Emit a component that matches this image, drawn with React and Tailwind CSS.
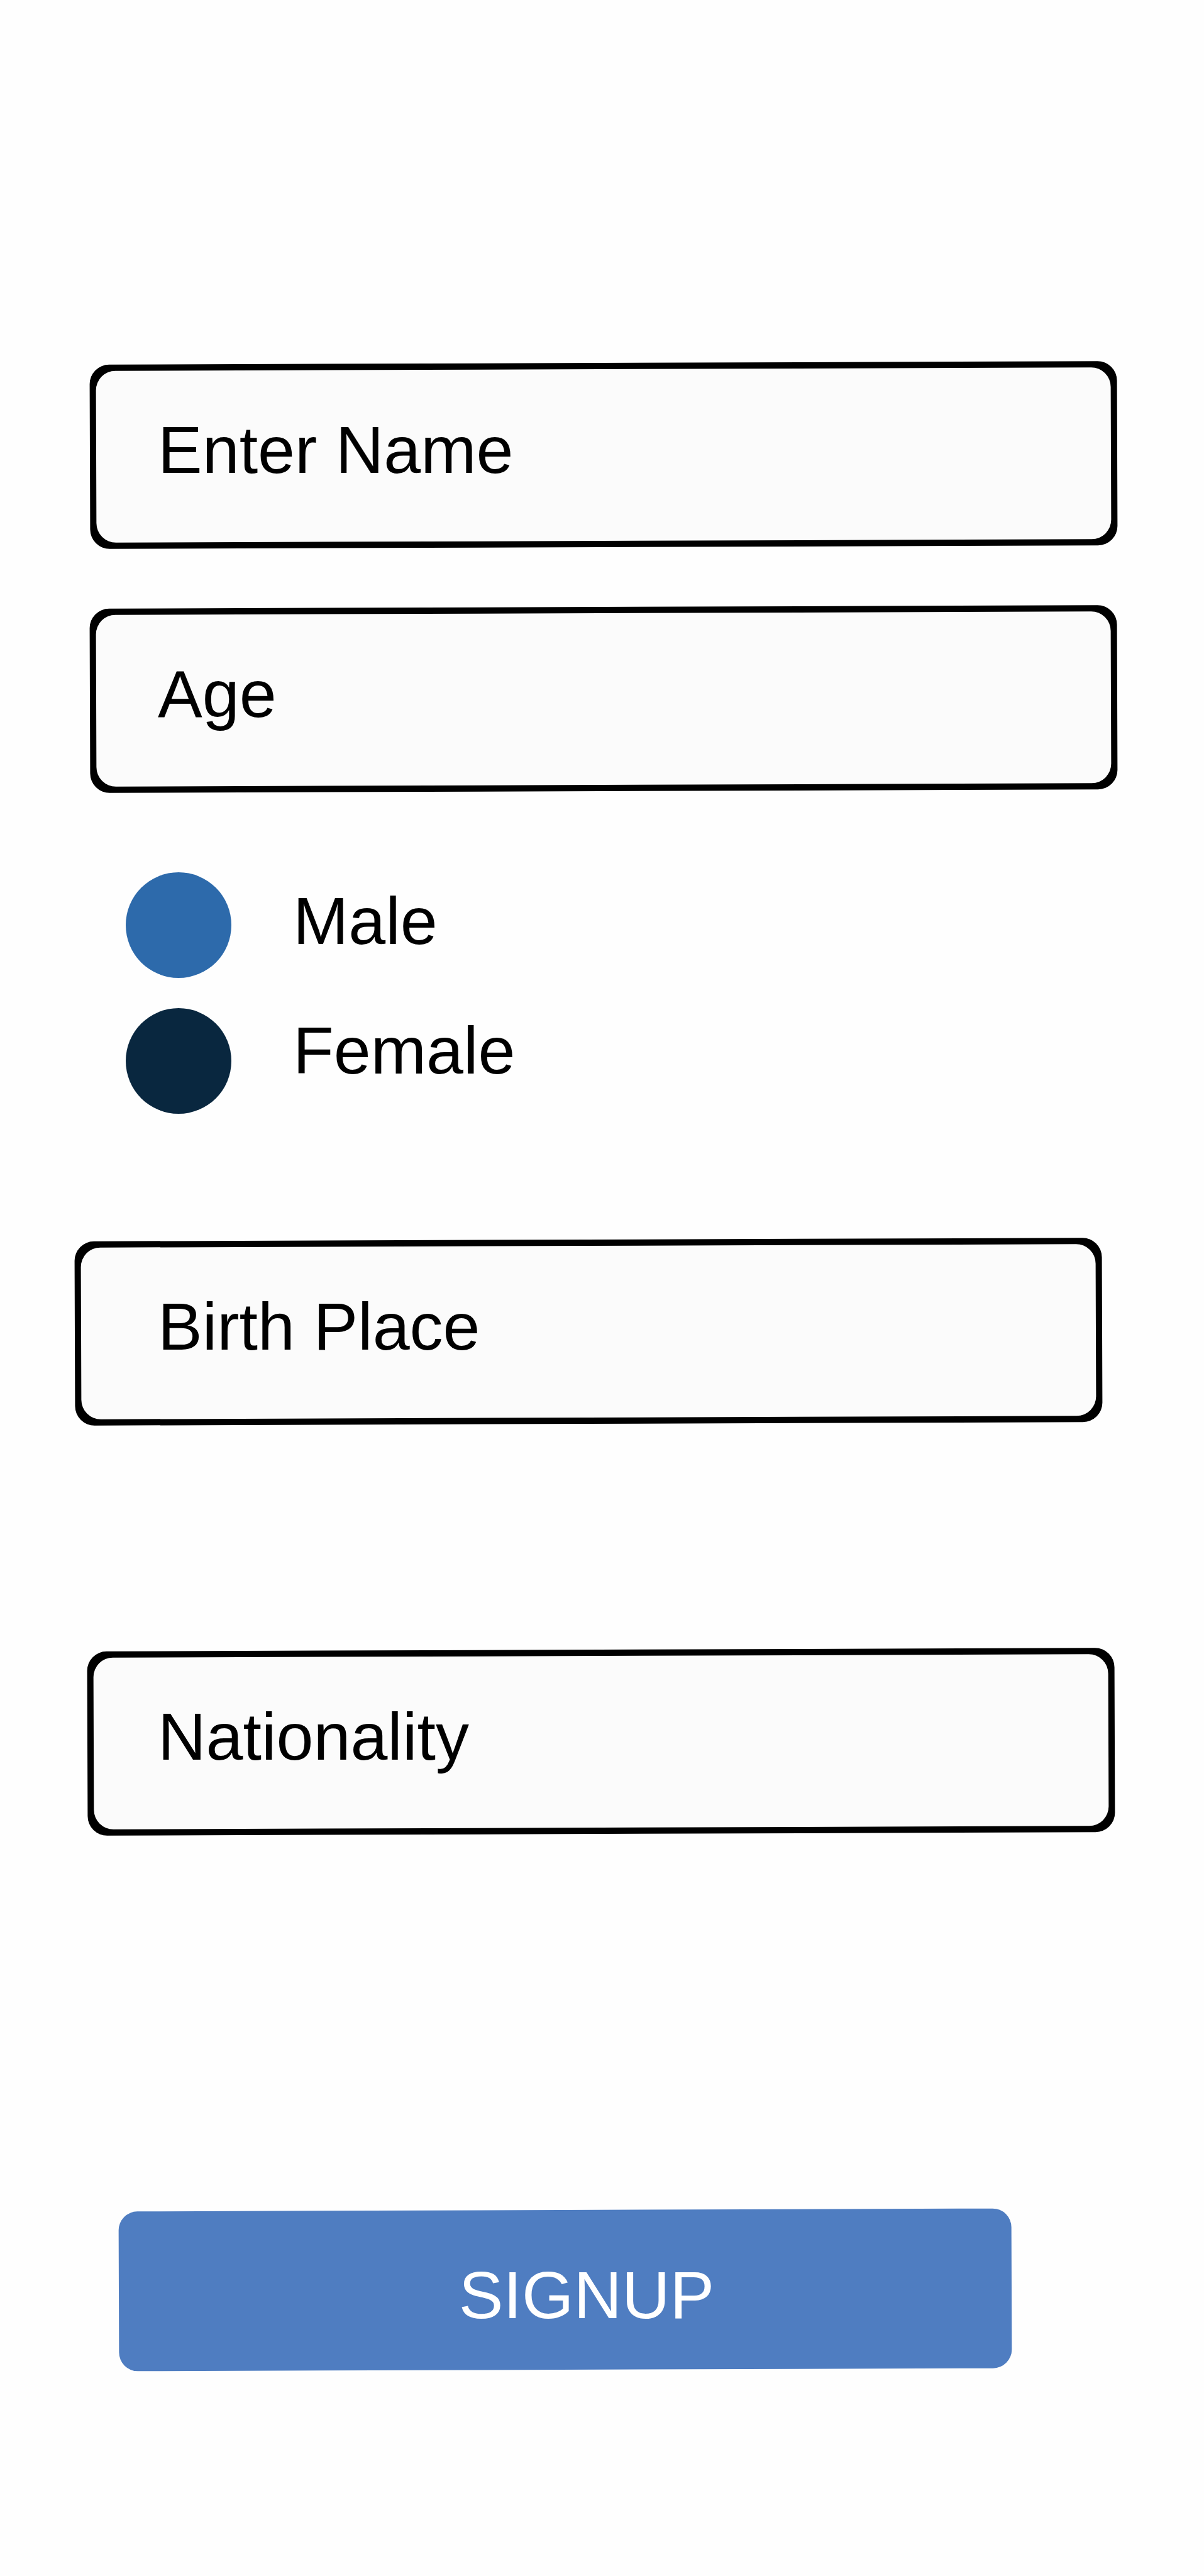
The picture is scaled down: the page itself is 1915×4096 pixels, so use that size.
import React from "react";

function Field({ id, label, type = "text", shift = "", indent = "pl-[108px]" }) {
  return (
    <div className={`relative h-[293px] ${shift}`}>
      <div className="absolute inset-0 -rotate-[0.2deg] rounded-[31px] bg-black p-[10px]">
        <div className="h-full rounded-[31px] bg-[#fbfbfb]" />
      </div>
      <input
        id={id}
        name={id}
        type={type}
        aria-label={label}
        placeholder={label}
        className={`relative block h-full w-full bg-transparent pb-4 pr-8 outline-none placeholder:text-black placeholder:opacity-100 ${indent}`}
      />
    </div>
  );
}

function Choice({ id, color, defaultChecked }) {
  return (
    <input
      id={id}
      type="radio"
      name="gender"
      value={id}
      defaultChecked={defaultChecked}
      className={`block size-[168px] appearance-none rounded-full ${color}`}
    />
  );
}

export default function App() {
  return (
    <main className="min-h-screen w-full overflow-hidden bg-[#fefefe] font-['Liberation_Sans',Arial,sans-serif] text-[106px] text-black">
      <form
        className="flex flex-col pb-[328px] pl-[143px] pr-[138px] pt-[577px]"
        onSubmit={(event) => event.preventDefault()}
      >
        <div className="flex flex-col gap-[95px]">
          <Field id="name" label="Enter Name" />
          <Field id="age" label="Age" />
        </div>

        <div role="radiogroup" aria-label="Gender" className="mt-[103px] flex gap-[98px] pl-[57px]">
          <div className="flex flex-col gap-12 pt-[26px]">
            <Choice id="male" color="bg-[#2d6aab]" defaultChecked />
            <Choice id="female" color="bg-[#09273f]" />
          </div>
          <div className="flex flex-col leading-[206px]">
            <label htmlFor="male">Male</label>
            <label htmlFor="female">Female</label>
          </div>
        </div>

        <div className="mt-[198px] flex flex-col gap-[359px]">
          <Field id="birth-place" label="Birth Place" shift="-ml-6 mr-6" indent="pl-[132px]" />
          <Field id="nationality" label="Nationality" shift="-ml-1 mr-1" indent="pl-[112px]" />
        </div>

        <button
          type="submit"
          className="relative ml-[46px] mr-[168px] mt-[598px] h-[254px] text-white"
        >
          <span className="absolute inset-0 -rotate-[0.2deg] rounded-[30px] bg-[#4f7dc1]" />
          <span className="relative flex h-full items-center justify-center pl-[68px] pt-4">SIGNUP</span>
        </button>
      </form>
    </main>
  );
}
